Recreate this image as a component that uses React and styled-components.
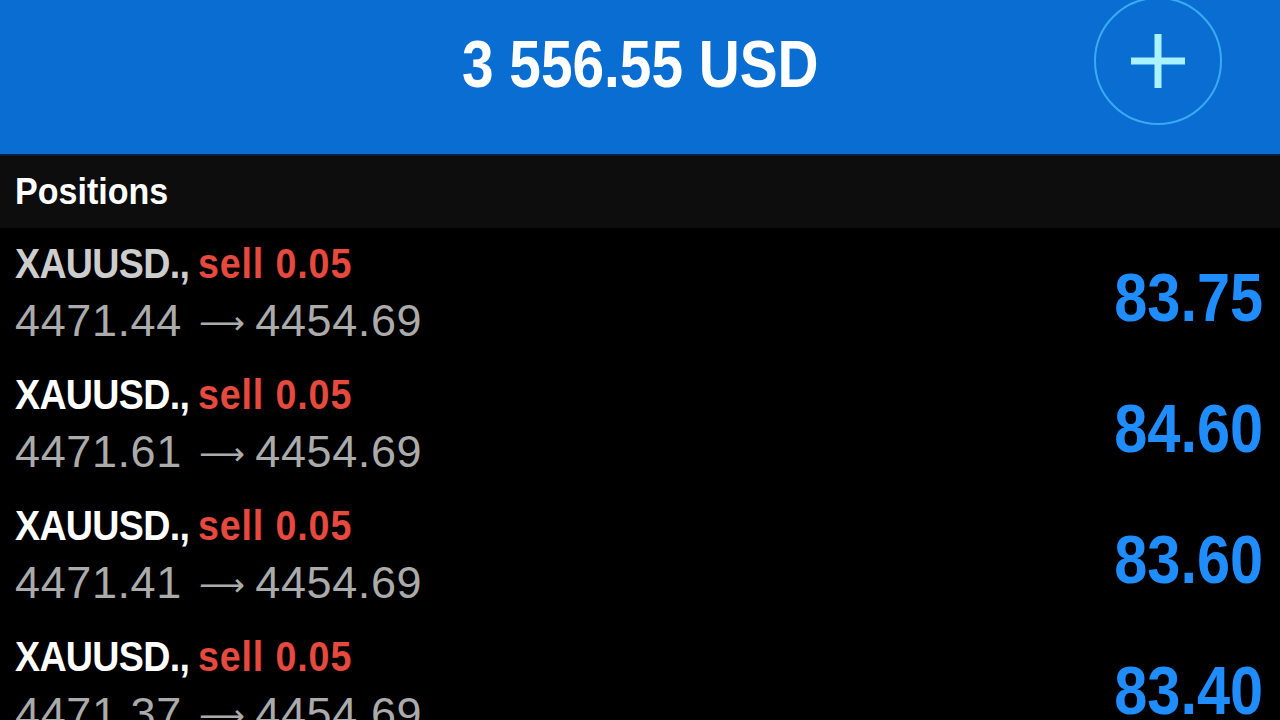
import React from "react";
import styled, { createGlobalStyle } from "styled-components";

const Global = createGlobalStyle`
  html, body { margin: 0; padding: 0; background: #000; }
  body { width: 1280px; height: 720px; overflow: hidden; }
  * { box-sizing: border-box; }
`;

const Page = styled.div`
  width: 1280px;
  height: 720px;
  background: #000;
  display: flex;
  flex-direction: column;
  overflow: hidden;
  font-family: "Liberation Sans", Arial, sans-serif;
`;

const Header = styled.header`
  position: relative;
  height: 156px;
  flex: none;
  background: #0a6dd1;
  border-bottom: 2px solid #061f3d;
  display: flex;
  justify-content: center;
  align-items: flex-start;
  padding-top: 14px;
`;

const Condensed = styled.span`
  display: inline-block;
  white-space: nowrap;
  transform: scaleX(${(p) => p.$k || 0.87});
  transform-origin: ${(p) => p.$origin || "left"} center;
`;

const Balance = styled.div`
  color: #fff;
  font-weight: 700;
  font-size: 66px;
  line-height: 100px;
`;

const AddButton = styled.button`
  position: absolute;
  right: 58px;
  top: -3px;
  width: 128px;
  height: 128px;
  border-radius: 50%;
  border: 2px solid #3aaaf5;
  background: transparent;
  display: flex;
  align-items: center;
  justify-content: center;
  padding: 0;
`;

const SectionHeader = styled.div`
  height: 72px;
  flex: none;
  background: #0d0d0d;
  padding-left: 15px;
  color: #fff;
  font-weight: 700;
  font-size: 37px;
  line-height: 72px;
`;

const List = styled.div`
  display: flex;
  flex-direction: column;
`;

const Row = styled.div`
  height: 131px;
  flex: none;
  display: flex;
  justify-content: space-between;
  padding: 6px 17px 0 15px;
`;

const Info = styled.div`
  display: flex;
  flex-direction: column;
`;

const Title = styled.div`
  font-weight: 700;
  font-size: 43px;
  line-height: 58px;
  white-space: nowrap;
`;

const Symbol = styled.span`
  color: ${(p) => (p.$dim ? "#cdcdcd" : "#ffffff")};
  letter-spacing: -0.8px;
  margin-right: -2px;
`;

const Side = styled.span`
  color: #e6493d;
  letter-spacing: 1px;
`;

const Prices = styled.div`
  font-size: 45px;
  line-height: 58px;
  letter-spacing: 0.6px;
  color: #ababab;
  white-space: nowrap;
`;

const Arrow = styled.span`
  display: inline-block;
  font-family: "DejaVu Sans", sans-serif;
  font-size: 32px;
  margin: 0 10px 0 17px;
  transform: translateY(-2px);
`;

const Profit = styled.div`
  align-self: center;
  margin-top: 0;
  color: #1f8dfd;
  font-weight: 700;
  font-size: 68px;
  line-height: 1;
`;

const rows = [
  { open: "4471.44", cur: "4454.69", profit: "83.75", dim: true },
  { open: "4471.61", cur: "4454.69", profit: "84.60" },
  { open: "4471.41", cur: "4454.69", profit: "83.60" },
  { open: "4471.37", cur: "4454.69", profit: "83.40" },
];

export default function App() {
  return (
    <Page>
      <Global />
      <Header>
        <Balance>
          <Condensed $k={0.86} $origin="center">3 556.55 USD</Condensed>
        </Balance>
        <AddButton aria-label="Add">
          <svg width="56" height="56" viewBox="0 0 56 56">
            <path d="M28 1v54M1 28h54" stroke="#abf2ff" strokeWidth="7" fill="none" />
          </svg>
        </AddButton>
      </Header>
      <SectionHeader>
        <Condensed $k={0.92}>Positions</Condensed>
      </SectionHeader>
      <List>
        {rows.map((r, i) => (
          <Row key={i}>
            <Info>
              <Title>
                <Condensed $k={0.875}>
                  <Symbol $dim={r.dim}>XAUUSD.,</Symbol> <Side>sell 0.05</Side>
                </Condensed>
              </Title>
              <Prices>
                {r.open}
                <Arrow>⟶</Arrow>
                {r.cur}
              </Prices>
            </Info>
            <Profit>
              <Condensed $k={0.875} $origin="right">{r.profit}</Condensed>
            </Profit>
          </Row>
        ))}
      </List>
    </Page>
  );
}
